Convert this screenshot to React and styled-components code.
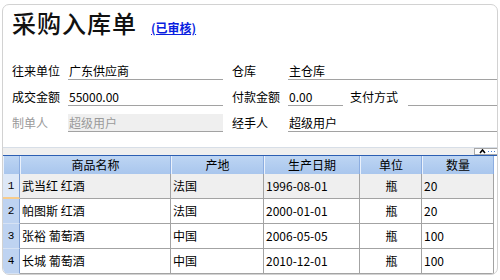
import React from "react";
import styled, { createGlobalStyle } from "styled-components";

const rows = [
  { no: 1, name: "武当红 红酒", origin: "法国", date: "1996-08-01", unit: "瓶", qty: "20" },
  { no: 2, name: "帕图斯 红酒", origin: "法国", date: "2000-01-01", unit: "瓶", qty: "20" },
  { no: 3, name: "张裕 葡萄酒", origin: "中国", date: "2006-05-05", unit: "瓶", qty: "100" },
  { no: 4, name: "长城 葡萄酒", origin: "中国", date: "2010-12-01", unit: "瓶", qty: "100" },
];

const columns = ["商品名称", "产地", "生产日期", "单位", "数量"];

const App = () => {
  return (
    <>
      <GlobalStyle />
      <Card>
        <TitleRow>
          <Title>采购入库单</Title>
          <Status href="#status">(已审核)</Status>
        </TitleRow>

        <Form>
          <Label $col="1">往来单位</Label>
          <Field $col="2">广东供应商</Field>
          <Label $col="4">仓库</Label>
          <Field $col="5 / -1">主仓库</Field>

          <Label $col="1">成交金额</Label>
          <Field $col="2">55000.00</Field>
          <Label $col="4">付款金额</Label>
          <Field $col="5">0.00</Field>
          <Label $col="7">支付方式</Label>
          <Field $col="8" />

          <Label $col="1" $muted>制单人</Label>
          <Field $col="2" $disabled>超级用户</Field>
          <Label $col="4">经手人</Label>
          <Field $col="5 / -1">超级用户</Field>
        </Form>

        <Strip>
          <Collapse>
            <svg width="24" height="5" viewBox="0 0 24 5">
              <polyline points="5,4 7.5,1 10,4" fill="none" stroke="#000" strokeWidth="1.6" />
              <line x1="13" y1="2.5" x2="24" y2="2.5" stroke="#4a7fd0" strokeWidth="1" strokeDasharray="1 2" />
            </svg>
          </Collapse>
        </Strip>

        <Sheet>
          <HeadCell />
          {columns.map((c) => (
            <HeadCell key={c}>{c}</HeadCell>
          ))}
          {rows.map((r, i) => (
            <React.Fragment key={r.no}>
              <NumCell $active={i === 0}>{r.no}</NumCell>
              <Cell $active={i === 0}>{r.name}</Cell>
              <Cell $active={i === 0}>{r.origin}</Cell>
              <Cell $active={i === 0}>{r.date}</Cell>
              <Cell $active={i === 0} $align="center">{r.unit}</Cell>
              <Cell $active={i === 0}>{r.qty}</Cell>
            </React.Fragment>
          ))}
        </Sheet>
      </Card>
    </>
  );
};

export default App;

const GlobalStyle = createGlobalStyle`
  body {
    margin: 0;
    background: #fff;
    font-family: "Noto Sans CJK SC", "Liberation Sans", sans-serif;
    color: #000;
  }
`;

const Card = styled.div`
  margin: 4px 0 0 2px;
  width: 496px;
  height: 271px;
  box-sizing: border-box;
  border: 1px solid #d2d2d2;
  border-radius: 7px;
  overflow: hidden;
  background: #fff;
  display: flex;
  flex-direction: column;
`;

const TitleRow = styled.div`
  display: flex;
  align-items: baseline;
  padding: 3px 0 0 9px;
  line-height: 30px;
`;

const Title = styled.h1`
  margin: 0;
  font-size: 24px;
  font-weight: 500;
  letter-spacing: 1px;
  color: #111;
`;

const Status = styled.a`
  margin-left: 14px;
  font-size: 12px;
  font-weight: 700;
  color: #0a1ee0;
  text-decoration: underline;
`;

const Form = styled.div`
  display: grid;
  grid-template-columns: 56px 155px 9px 56px 55px 7px 58px 1fr;
  grid-auto-rows: 26px;
  align-items: end;
  padding-left: 9px;
  margin-top: 12px;
  font-size: 12px;
`;

const Label = styled.div`
  grid-column: ${(p) => p.$col};
  height: 18px;
  line-height: 18px;
  margin-bottom: 1px;
  white-space: nowrap;
  color: ${(p) => (p.$muted ? "#9a9a9a" : "#000")};
`;

const Field = styled.div`
  grid-column: ${(p) => p.$col};
  height: 18px;
  box-sizing: border-box;
  margin-bottom: 1px;
  padding-left: 1px;
  line-height: 17px;
  white-space: nowrap;
  border-bottom: 1px solid #a2a2a2;
  background: ${(p) => (p.$disabled ? "#efefef" : "transparent")};
  color: ${(p) => (p.$disabled ? "#9a9a9a" : "#000")};
`;

const Strip = styled.div`
  margin-top: 14px;
  height: 11px;
  border-top: 1px solid #d7dee7;
  background: #efefef;
  display: flex;
  justify-content: flex-end;
  align-items: center;
`;

const Collapse = styled.div`
  width: 27px;
  height: 7px;
  box-sizing: border-box;
  margin-right: -4px;
  border: 1px solid #a8a8a8;
  background: #fff;
  display: flex;
  align-items: center;

  svg {
    display: block;
  }
`;

const Sheet = styled.div`
  display: grid;
  grid-template-columns: 17px 151px 93px 96px 62px 72px;
  border-top: 1px solid #2c5fb3;
  font-size: 12px;
`;

const HeadCell = styled.div`
  height: 18px;
  line-height: 18px;
  text-align: center;
  background: linear-gradient(#bdd5f3, #a9c6ed);
  box-shadow: inset 1px 0 #eaf1fb, inset -1px 0 #8cade0;
`;

const NumCell = styled.div`
  height: 25px;
  box-sizing: border-box;
  line-height: 24px;
  text-align: center;
  font-family: "Liberation Mono", monospace;
  font-size: 11px;
  background: ${(p) => (p.$active ? "#dde8f7" : "#bed3f1")};
  border-right: 1px solid #7f9fd3;
  border-bottom: ${(p) => (p.$active ? "2px solid #f7cc8c" : "1px solid #d6e2f4")};
`;

const Cell = styled.div`
  height: 25px;
  box-sizing: border-box;
  line-height: 24px;
  padding-left: 2px;
  white-space: nowrap;
  text-align: ${(p) => p.$align || "left"};
  background: ${(p) => (p.$active ? "#efefef" : "#fff")};
  border-right: 1px solid #a3a3a3;
  border-bottom: 1px solid #a3a3a3;
`;
